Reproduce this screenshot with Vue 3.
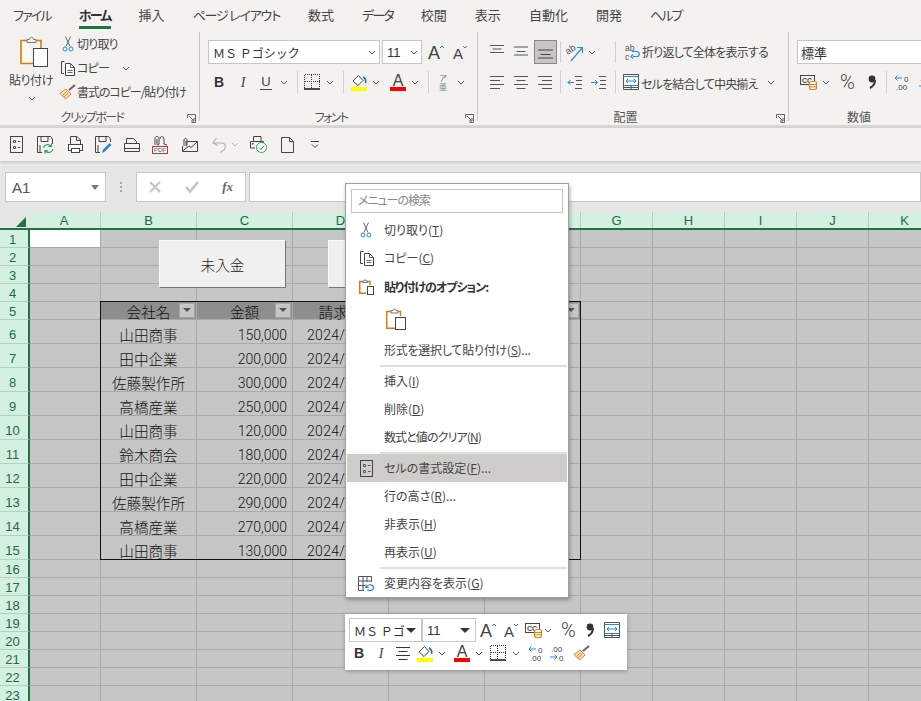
<script setup>
const size = {
  cut: [12, 16], copy: [15, 16], paste: [28, 31], painter: [17, 16], chev: [8, 5], sep: [1, 22],
  bold: [12, 16], ital: [10, 16], under: [14, 17], border: [16, 16], fill: [16, 18], fcolor: [16, 18],
  phon: [14, 18], grow: [17, 16], shrink: [16, 16], alT: [16, 16], alM: [16, 16], alBs: [23, 24],
  orient: [18, 17], alL: [16, 16], alC: [16, 16], alR: [16, 16], indL: [16, 16], indR: [16, 16],
  wrap: [16, 17], merge: [16, 16], numfmt: [17, 16], pct: [17, 16], comma: [10, 16], inc: [16, 16], dec: [16, 16],
  fmt: [13, 17], qsave: [17, 18], qprev: [15, 17], qpen: [17, 18], qopen: [16, 15], qpdf: [16, 18],
  qmail: [16, 14], qundo: [15, 16], qchev: [8, 5], qprint: [17, 17], qpage: [13, 16], qcust: [8, 9],
  changes: [16, 15], center: [16, 16]
}
function pos(start, list) {
  let x = start
  return list.map(([n, cx, w, h]) => {
    const [sw, sh] = size[n]
    const iw = w || sw
    const ih = h || sh
    const ml = cx - iw / 2 - x
    x = cx + iw / 2
    return { n, w: iw, h: ih, ml }
  })
}
const tabs = ['ファイル', 'ホーム', '挿入', 'ページ レイアウト', '数式', 'データ', '校閲', '表示', '自動化', '開発', 'ヘルプ']
const isKana = (t) => /^[\u30A0-\u30FF]+$/.test(t)
const fontTop = pos(422, [['grow', 436], ['shrink', 460]])
const fontBottom = pos(200, [['bold', 219], ['ital', 243], ['under', 266], ['chev', 284], ['sep', 297], ['border', 312], ['chev', 330], ['sep', 343], ['fill', 359], ['chev', 376], ['fcolor', 398], ['chev', 415], ['sep', 428], ['phon', 443], ['chev', 461]])
const alignTop = pos(478, [['alT', 497], ['alM', 521], ['alBs', 545], ['sep', 560], ['orient', 575], ['chev', 592], ['sep', 615], ['wrap', 632]])
const alignBottom = pos(478, [['alL', 497], ['alC', 521], ['alR', 545], ['sep', 560], ['indL', 575], ['indR', 599], ['sep', 615], ['merge', 631]])
const numBottom = pos(789, [['numfmt', 808], ['chev', 826], ['pct', 847], ['comma', 872], ['sep', 886], ['inc', 902], ['dec', 926]])
const qat = pos(0, [['fmt', 16], ['qsave', 45], ['qprev', 75], ['qpen', 103], ['qopen', 132], ['qpdf', 160], ['qmail', 190], ['qundo', 219], ['qchev', 235], ['qprint', 258], ['qpage', 287], ['qcust', 315]])
const miniTop = pos(476, [['grow', 488], ['shrink', 511], ['numfmt', 533], ['chev', 548], ['pct', 568], ['comma', 590], ['merge', 612]])
const miniBottom = pos(346, [['bold', 360], ['ital', 382], ['center', 404], ['fill', 426], ['chev', 443], ['fcolor', 463], ['chev', 480], ['border', 499], ['chev', 517], ['inc', 537], ['dec', 558], ['painter', 582]])

const cols = [
  { n: 'A', w: 73 }, { n: 'B', w: 96 }, { n: 'C', w: 96 }, { n: 'D', w: 96 }, { n: 'E', w: 96 }, { n: 'F', w: 96 },
  { n: 'G', w: 72 }, { n: 'H', w: 72 }, { n: 'I', w: 72 }, { n: 'J', w: 72 }, { n: 'K', w: 72 }
]
const table = {
  6: ['山田商事', '150,000', '2024/01/10'], 7: ['田中企業', '200,000', '2024/01/15'],
  8: ['佐藤製作所', '300,000', '2024/01/20'], 9: ['高橋産業', '250,000', '2024/01/25'],
  10: ['山田商事', '120,000', '2024/02/05'], 11: ['鈴木商会', '180,000', '2024/02/10'],
  12: ['田中企業', '220,000', '2024/02/15'], 13: ['佐藤製作所', '290,000', '2024/02/20'],
  14: ['高橋産業', '270,000', '2024/02/25'], 15: ['山田商事', '130,000', '2024/03/05']
}
const rowNums = Array.from({ length: 23 }, (_, i) => i + 1)
const menuA = [{ t: '切り取り(', k: 'T', e: ')', i: 'cut' }, { t: 'コピー(', k: 'C', e: ')', i: 'copy' }]
const menuB = [{ t: '挿入(', k: 'I', e: ')' }, { t: '削除(', k: 'D', e: ')' }, { t: '数式と値のクリア(', k: 'N', e: ')', tight: true }]
const menuC = [
  { t: 'セルの書式設定(', k: 'F', e: ')...', i: 'fmt', hover: true }, { t: '行の高さ(', k: 'R', e: ')...' },
  { t: '非表示(', k: 'H', e: ')' }, { t: '再表示(', k: 'U', e: ')' }
]
</script>

<template>
  <div class="app">
    <svg class="defs" width="0" height="0">
      <symbol id="cut" viewBox="0 0 12 16"><path d="M3.5 .5L8 10.5M8.5 .5L4 10.5" stroke="#666" fill="none"/><circle cx="3" cy="13" r="2" stroke="#2b88d8" fill="none"/><circle cx="9" cy="13" r="2" stroke="#2b88d8" fill="none"/></symbol>
      <symbol id="copy" viewBox="0 0 15 16"><path d="M4.5 1.5H1.5V13.5H4" stroke="#444" fill="none"/><path d="M5.5 3.5H10.5L14.5 7.5V15.5H5.5Z" stroke="#444" fill="#fff"/><path d="M10.5 3.5V7.5H14.5M7.5 10.5H12.5M7.5 12.5H12.5" stroke="#666" fill="none"/></symbol>
      <symbol id="paste" viewBox="0 0 28 31"><path d="M8 4.5H1V27.5H13M15 4.5H21V12" stroke="#d87a14" stroke-width="1.6" fill="#fff8ee"/><path d="M7 6.5V3.5H9.5C9.5 .5 13.5 .5 13.5 3.5H16V6.5Z" stroke="#777" fill="#f3f2f1"/><rect x="13.5" y="12.5" width="14" height="18" stroke="#444" fill="#fff"/></symbol>
      <symbol id="pasteS" viewBox="0 0 15 16"><path d="M3.5 2.5H.75V14.25H7M8.5 2.5H11V6" stroke="#d87a14" stroke-width="1.5" fill="none"/><path d="M3.5 3.5V2H5C5 .3 7 .3 7 2H8.5V3.5Z" stroke="#777" fill="#fff"/><rect x="8.5" y="7.5" width="6" height="8" stroke="#444" fill="#fff"/></symbol>
      <symbol id="pasteB" viewBox="0 0 20 22"><path d="M5 3.5H.75V20.25H9M11 3.5H14.5V8" stroke="#d87a14" stroke-width="1.5" fill="none"/><path d="M5 5V2.5H7C7 .3 10 .3 10 2.5H12V5Z" stroke="#777" fill="#fff"/><rect x="9.5" y="9.5" width="10" height="12" stroke="#444" fill="#fff"/></symbol>
      <symbol id="painter" viewBox="0 0 17 16"><path d="M16 1L10 6" stroke="#666" stroke-width="2"/><path d="M1 9.5L7 5L12 10L6.5 15Z" stroke="#e07f1c" fill="#fde7cf"/><path d="M3.5 11.5L8 7.5M5 13L9.5 9" stroke="#e07f1c"/></symbol>
      <symbol id="chev" viewBox="0 0 8 5"><path d="M1 1L4 4L7 1" stroke="#555" fill="none"/></symbol>
      <symbol id="qchev" viewBox="0 0 8 5"><path d="M1 1L4 4L7 1" stroke="#b5b3b1" fill="none"/></symbol>
      <symbol id="sep" viewBox="0 0 1 22"><rect width="1" height="22" fill="#d2d0ce"/></symbol>
      <symbol id="launch" viewBox="0 0 9 9"><path d="M.5 4V.5H8.5V8.5H4.5M2 2L7 7M7 4V7H4" stroke="#666" fill="none"/></symbol>
      <symbol id="bold" viewBox="0 0 12 16"><text x="6" y="13" text-anchor="middle" font-family="Liberation Sans" font-size="14" font-weight="700" fill="#333">B</text></symbol>
      <symbol id="ital" viewBox="0 0 10 16"><text x="5" y="13" text-anchor="middle" font-family="Liberation Serif" font-size="14" font-style="italic" fill="#444">I</text></symbol>
      <symbol id="under" viewBox="0 0 14 17"><text x="7" y="12" text-anchor="middle" font-family="Liberation Sans" font-size="13" fill="#444">U</text><path d="M1 15.5H13" stroke="#444"/></symbol>
      <symbol id="border" viewBox="0 0 16 16"><path d="M.5 .5H15.5V14M.5 .5V14M7.5 .5V14M.5 7.5H15.5" stroke="#333" stroke-dasharray="1 1" fill="none" shape-rendering="crispEdges"/><path d="M0 15H16" stroke="#111" stroke-width="1.5"/></symbol>
      <symbol id="fill" viewBox="0 0 16 18"><path d="M2 8L7.5 2.5L12 7.5L7 12.5Z" stroke="#444" fill="#fff"/><path d="M12 4C15 5.5 15 8 14.5 10" stroke="#2b6cb0" stroke-width="1.6" fill="none"/><rect y="14" width="16" height="4" fill="#ff0"/></symbol>
      <symbol id="fcolor" viewBox="0 0 16 18"><text x="8" y="12.5" text-anchor="middle" font-family="Liberation Sans" font-size="16" fill="#444">A</text><rect y="14" width="16" height="4" fill="#f00"/></symbol>
      <symbol id="phon" viewBox="0 0 14 18"><text x="7" y="8" text-anchor="middle" font-family="Noto Sans CJK JP" font-size="8" fill="#777">ア</text><text x="7" y="17" text-anchor="middle" font-family="Noto Sans CJK JP" font-size="8" fill="#777">亜</text></symbol>
      <symbol id="grow" viewBox="0 0 17 16"><text x="0" y="15" font-family="Liberation Sans" font-size="18" fill="#444">A</text><path d="M12 4L14 2L16 4" stroke="#2b88d8" fill="none"/></symbol>
      <symbol id="shrink" viewBox="0 0 16 16"><text x="1" y="15" font-family="Liberation Sans" font-size="15" fill="#444">A</text><path d="M11 2L13 4L15 2" stroke="#2b88d8" fill="none"/></symbol>
      <symbol id="alT" viewBox="0 0 16 16"><path d="M1 1.5H15M3.5 5H12.5M1 8.5H15" stroke="#555"/></symbol>
      <symbol id="alM" viewBox="0 0 16 16"><path d="M1 3H15M3.5 7.5H12.5M1 11H15" stroke="#555"/></symbol>
      <symbol id="alBs" viewBox="0 0 23 24"><rect x=".5" y=".5" width="22" height="23" fill="#c8c6c4" stroke="#8a8886"/><path d="M4 10H19M6.5 14.5H16.5M4 18H19" stroke="#444"/></symbol>
      <symbol id="orient" viewBox="0 0 18 17"><text x="0" y="9" transform="rotate(-35 4 7)" font-family="Liberation Sans" font-size="9.5" fill="#555">ab</text><path d="M5 17L16 4M11 3.5H16.5V9" stroke="#2b88d8" fill="none" stroke-width="1.2"/></symbol>
      <symbol id="alL" viewBox="0 0 16 16"><path d="M1 2.5H15M1 6.5H11M1 10.5H15M1 14.5H11" stroke="#555"/></symbol>
      <symbol id="alC" viewBox="0 0 16 16"><path d="M1 2.5H15M3.5 6.5H12.5M1 10.5H15M3.5 14.5H12.5" stroke="#555"/></symbol>
      <symbol id="alR" viewBox="0 0 16 16"><path d="M1 2.5H15M5 6.5H15M1 10.5H15M5 14.5H15" stroke="#555"/></symbol>
      <symbol id="center" viewBox="0 0 16 16"><path d="M1 2.5H15M3.5 6.5H12.5M1 10.5H15M3.5 14.5H12.5" stroke="#333"/></symbol>
      <symbol id="indL" viewBox="0 0 16 16"><path d="M8 2.5H15M9 6.5H15M9 10.5H15M8 14.5H15" stroke="#555"/><path d="M7 8.5H1M3.5 6L1 8.5L3.5 11" stroke="#2b88d8" fill="none"/></symbol>
      <symbol id="indR" viewBox="0 0 16 16"><path d="M8 2.5H15M9 6.5H15M9 10.5H15M8 14.5H15" stroke="#555"/><path d="M0 8.5H6.5M4 6L6.5 8.5L4 11" stroke="#2b88d8" fill="none"/></symbol>
      <symbol id="wrap" viewBox="0 0 16 17"><text x="1" y="7" font-family="Liberation Sans" font-size="8.5" fill="#555">ab</text><text x="1" y="16" font-family="Liberation Sans" font-size="8.5" fill="#555">c</text><path d="M9 12.5H13C16 12.5 16 7.5 13 7.5H8M9 10.5L7 12.5L9 14.5" stroke="#2b88d8" fill="none" stroke-width="1.2"/></symbol>
      <symbol id="merge" viewBox="0 0 16 16"><rect x=".5" y="2.5" width="15" height="9" fill="#fff" stroke="#2b88d8"/><path d="M.5 .5H15.5M.5 15.5H15.5M.5 .5V15.5M15.5 .5V15.5M8 11.5V15.5M.5 13.5H15.5" stroke="#555" fill="none"/><path d="M3 7H13M5 5L3 7L5 9M11 5L13 7L11 9" stroke="#2b88d8" fill="none"/></symbol>
      <symbol id="numfmt" viewBox="0 0 17 16"><rect x=".5" y="1.5" width="14" height="9" stroke="#444" fill="none"/><text x="2" y="9" font-family="Liberation Sans" font-size="7" font-weight="700" fill="#444">CC</text><rect x="9.5" y="7.5" width="7" height="8" rx="2" fill="#fff" stroke="#e07f1c" stroke-width="1.2"/><path d="M10 10.5H16M10 12.8H16" stroke="#e07f1c"/></symbol>
      <symbol id="pct" viewBox="0 0 17 16"><text x="8.5" y="15" text-anchor="middle" font-family="Roboto" font-weight="300" font-size="20" fill="#444">%</text></symbol>
      <symbol id="comma" viewBox="0 0 10 16"><circle cx="5" cy="5" r="3.4" fill="#333"/><path d="M8 6C8 10 6 12.5 3 14" stroke="#333" stroke-width="2" fill="none"/></symbol>
      <symbol id="inc" viewBox="0 0 16 16"><path d="M8 4H1M3.5 1.5L1 4L3.5 6.5" stroke="#2b88d8" fill="none"/><text x="10" y="8" font-family="Liberation Sans" font-size="8" fill="#444">0</text><text x="2" y="16" font-family="Liberation Sans" font-size="8" fill="#444">.00</text></symbol>
      <symbol id="dec" viewBox="0 0 16 16"><text x="2" y="7" font-family="Liberation Sans" font-size="8" fill="#444">.00</text><path d="M1 12H8M5.5 9.5L8 12L5.5 14.5" stroke="#2b88d8" fill="none"/><text x="10" y="16" font-family="Liberation Sans" font-size="8" fill="#444">0</text></symbol>
      <symbol id="fmt" viewBox="0 0 13 17"><rect x=".5" y=".5" width="12" height="16" fill="none" stroke="#444"/><path d="M3.5 4.5H5.5V6.5H3.5ZM3.5 10.5H5.5V12.5H3.5Z" fill="none" stroke="#555"/><path d="M8 5.5H10.5M8 11.5H10.5" stroke="#555"/></symbol>
      <symbol id="qsave" viewBox="0 0 17 18"><path d="M5 16.5H.5V.5H13.5L15.5 3V8" stroke="#444" fill="none"/><path d="M4 .5V5.5H11V.5M3 9V16" stroke="#444" fill="none"/><path d="M6.5 12C7 8.5 11.5 7.5 14 10M16 13C15.5 16.5 11 17.5 8.5 15M14.5 7.5V10.5H11.5M8 17.5V14.5H11" stroke="#2e9e5b" stroke-width="1.2" fill="none"/></symbol>
      <symbol id="qprev" viewBox="0 0 15 17"><path d="M2.5 8V.5H9L12.5 4V8M8.5 .5V4.5H12.5" stroke="#444" fill="none"/><rect x=".5" y="8.5" width="14" height="6" fill="#fff" stroke="#444"/><rect x="3.5" y="12.5" width="8" height="4" fill="#fff" stroke="#444"/></symbol>
      <symbol id="qpen" viewBox="0 0 17 18"><path d="M5 16.5H.5V.5H13.5L15.5 3V6" stroke="#444" fill="none"/><path d="M4 .5V5.5H11V.5M3 9V16" stroke="#444" fill="none"/><path d="M7 17L8 13.5L14.5 7L16.5 9L10 15.5Z" fill="#2b88d8"/></symbol>
      <symbol id="qopen" viewBox="0 0 16 15"><path d="M2.5 6V1.5H9.5L12.5 4.5V6" stroke="#444" fill="none"/><path d="M.5 6.5H15.5V14.5H.5ZM.5 11.5H15.5" stroke="#444" fill="none"/></symbol>
      <symbol id="qpdf" viewBox="0 0 16 18"><path d="M3 9V2.5C3 -.2 7 -.2 7 2.5V8C7 9.5 5 9.5 5 8V3M8 3C8 -.2 12 -.2 12 3V8L15 9" stroke="#444" fill="none"/><rect x=".5" y="10.5" width="15" height="7" stroke="#d9302c" fill="#fff"/><text x="8" y="16.3" text-anchor="middle" font-family="Liberation Sans" font-size="6" fill="#555">PDF</text></symbol>
      <symbol id="qmail" viewBox="0 0 16 14"><path d="M5 3.5H15.5V13.5H.5V8M.5 13L7 8L9 9.5L15.5 3.5" stroke="#444" fill="none"/><path d="M2 8V2C2 0 5 0 5 2V7C5 8 4 8 4 7V3" stroke="#444" fill="none"/></symbol>
      <symbol id="qundo" viewBox="0 0 15 16"><path d="M1 6H9C15 6 15 12 8 15.5M4.5 1L1 6L6 8.5" stroke="#b5b3b1" stroke-width="1.2" fill="none"/></symbol>
      <symbol id="qprint" viewBox="0 0 17 17"><path d="M3.5 5V.5H11V5M.5 5.5H13.5V9M.5 5.5V12H5" stroke="#444" fill="none"/><rect x="2" y="7" width="1.5" height="1.5" fill="#444"/><circle cx="11.5" cy="11.5" r="5" fill="#fff" stroke="#2e9e5b"/><path d="M9 11.5L11 13.5L14 9.8" stroke="#2e9e5b" fill="none"/></symbol>
      <symbol id="qpage" viewBox="0 0 13 16"><path d="M.5 .5H8.5L12.5 4.5V15.5H.5ZM8.5 .5V4.5H12.5" stroke="#444" fill="none"/></symbol>
      <symbol id="qcust" viewBox="0 0 8 9"><path d="M0 1.5H8" stroke="#444"/><path d="M1 4.5L4 7.5L7 4.5" stroke="#444" fill="none"/></symbol>
      <symbol id="changes" viewBox="0 0 16 15"><path d="M.5 .5H13.5V6M.5 .5V14.5H6M.5 5H13.5M.5 9.5H7M5 .5V14.5M9 .5V6" stroke="#555" fill="none"/><path d="M8 8.5V11.5H11M8.5 11C10 7.5 15.5 8.5 15.5 11.5C15.5 14.5 11.5 15.5 9.5 13.5" stroke="#2b88d8" fill="none" stroke-width="1.2"/></symbol>
    </svg>

    <header class="ribbon">
      <nav class="tabs">
        <span v-for="t in tabs" :key="t" class="tab" :class="{ active: t === 'ホーム', kana: isKana(t), spaced: t.includes(' ') }">{{ t }}</span>
      </nav>
      <div class="groups">
        <section class="group g-clip">
          <div class="body clip-body">
            <div class="paste-col">
              <svg class="paste-icon" width="28" height="31"><use href="#paste" /></svg>
              <span class="txt paste-label">貼り付け</span>
              <svg class="paste-chev" width="8" height="5"><use href="#chev" /></svg>
            </div>
            <div class="clip-list">
              <div class="clip-row"><span class="clip-ic"><svg width="12" height="16"><use href="#cut" /></svg></span><span class="txt">切り取り</span></div>
              <div class="clip-row"><span class="clip-ic"><svg width="15" height="16"><use href="#copy" /></svg></span><span class="txt">コピー</span><svg class="copy-chev" width="8" height="5"><use href="#chev" /></svg></div>
              <div class="clip-row"><span class="clip-ic"><svg width="17" height="16"><use href="#painter" /></svg></span><span class="txt painter-txt">書式のコピー/貼り付け</span></div>
            </div>
          </div>
          <div class="label"><span class="lk">クリップボード</span><svg class="launch" width="9" height="9"><use href="#launch" /></svg></div>
        </section>

        <section class="group g-font">
          <div class="body">
            <div class="irow">
              <div class="combo font-combo"><span>ＭＳ Ｐゴシック</span><svg width="8" height="5"><use href="#chev" /></svg></div>
              <div class="combo size-combo"><span class="num11">11</span><svg width="8" height="5"><use href="#chev" /></svg></div>
              <svg v-for="(i, k) in fontTop" :key="k" class="ic" :style="{ marginLeft: i.ml + 'px' }" :width="i.w" :height="i.h"><use :href="'#' + i.n" /></svg>
            </div>
            <div class="irow second">
              <svg v-for="(i, k) in fontBottom" :key="k" class="ic" :style="{ marginLeft: i.ml + 'px' }" :width="i.w" :height="i.h"><use :href="'#' + i.n" /></svg>
            </div>
          </div>
          <div class="label"><span class="lk">フォント</span><svg class="launch" width="9" height="9"><use href="#launch" /></svg></div>
        </section>

        <section class="group g-align">
          <div class="body">
            <div class="irow">
              <svg v-for="(i, k) in alignTop" :key="k" class="ic" :style="{ marginLeft: i.ml + 'px' }" :width="i.w" :height="i.h"><use :href="'#' + i.n" /></svg>
              <span class="txt wide">折り返して全体を表示する</span>
            </div>
            <div class="irow second">
              <svg v-for="(i, k) in alignBottom" :key="k" class="ic" :style="{ marginLeft: i.ml + 'px' }" :width="i.w" :height="i.h"><use :href="'#' + i.n" /></svg>
              <span class="txt wide low">セルを結合して中央揃え</span>
              <svg class="merge-chev" width="8" height="5"><use href="#chev" /></svg>
            </div>
          </div>
          <div class="label"><span>配置</span><svg class="launch" width="9" height="9"><use href="#launch" /></svg></div>
        </section>

        <section class="group g-num">
          <div class="body">
            <div class="irow"><div class="combo num-combo"><span>標準</span></div></div>
            <div class="irow second">
              <svg v-for="(i, k) in numBottom" :key="k" class="ic" :style="{ marginLeft: i.ml + 'px' }" :width="i.w" :height="i.h"><use :href="'#' + i.n" /></svg>
            </div>
          </div>
          <div class="label"><span>数値</span><svg class="launch" width="9" height="9"><use href="#launch" /></svg></div>
        </section>
      </div>
    </header>

    <div class="qat">
      <svg v-for="(i, k) in qat" :key="k" class="ic" :style="{ marginLeft: i.ml + 'px' }" :width="i.w" :height="i.h"><use :href="'#' + i.n" /></svg>
    </div>

    <div class="fbar">
      <div class="namebox"><span>A1</span><i class="tri"></i></div>
      <div class="dots"><i></i><i></i><i></i></div>
      <div class="fbtns">
        <span class="fb-i"><svg width="12" height="12"><path d="M1 1L11 11M11 1L1 11" stroke="#c4c4c4" stroke-width="2" fill="none" /></svg></span>
        <span class="fb-i"><svg width="14" height="12"><path d="M1 6L5 10.5L13 1" stroke="#c4c4c4" stroke-width="2.6" fill="none" /></svg></span>
        <span class="fb-f">fx</span>
      </div>
      <div class="finput"></div>
    </div>

    <main class="sheet">
      <div class="colhead">
        <div class="corner"><svg width="10" height="10"><path d="M10 0V10H0Z" fill="#217346" /></svg></div>
        <div v-for="c in cols" :key="c.n" class="ch" :class="'w' + c.w">{{ c.n }}</div>
      </div>
      <div v-for="r in rowNums" :key="r" class="row" :class="{ tall: r >= 6 && r <= 15, hd: r === 5 }">
        <div class="rh">{{ r }}</div>
        <div class="cell a" :class="{ a1: r === 1 }"></div>
        <template v-if="r === 5">
          <div class="cell w96 thc">会社名<i class="fbtn"></i></div>
          <div class="cell w96 thc">金額<i class="fbtn"></i></div>
          <div class="cell w96 thc">請求日<i class="fbtn"></i></div>
          <div class="cell w96 thc"><i class="fbtn"></i></div>
          <div class="cell w96 thc"><i class="fbtn"></i></div>
        </template>
        <template v-else-if="table[r]">
          <div class="cell w96 tc">{{ table[r][0] }}</div>
          <div class="cell w96 tr">{{ table[r][1] }}</div>
          <div class="cell w96 td">{{ table[r][2] }}</div>
          <div class="cell w96"></div>
          <div class="cell w96"></div>
        </template>
        <template v-else>
          <div v-for="n in 5" :key="n" class="cell w96"></div>
        </template>
        <div v-for="n in 5" :key="'x' + n" class="cell w72"></div>
      </div>
      <div class="frame"></div>
      <button class="sbtn s1">未入金</button>
      <button class="sbtn s2"></button>
    </main>

    <div class="menu">
      <div class="search">メニューの検索</div>
      <div v-for="m in menuA" :key="m.k" class="mi">
        <span class="mic"><svg :width="m.i === 'cut' ? 12 : 15" height="16"><use :href="'#' + m.i" /></svg></span>
        <span class="mt">{{ m.t }}<u>{{ m.k }}</u>{{ m.e }}</span>
      </div>
      <div class="mi mh">
        <span class="mic"><svg width="15" height="16"><use href="#pasteS" /></svg></span>
        <b class="mt bh">貼り付けのオプション:</b>
      </div>
      <div class="mbig"><svg width="20" height="22"><use href="#pasteB" /></svg></div>
      <div class="mi"><span class="mic"></span><span class="mt slight">形式を選択して貼り付け(<u>S</u>)...</span></div>
      <div class="msep"></div>
      <div v-for="m in menuB" :key="m.k" class="mi"><span class="mic"></span><span class="mt" :class="{ tight: m.tight }">{{ m.t }}<u>{{ m.k }}</u>{{ m.e }}</span></div>
      <div class="msep"></div>
      <div v-for="m in menuC" :key="m.k" class="mi" :class="{ hover: m.hover }">
        <span class="mic"><svg v-if="m.i" width="13" height="17"><use href="#fmt" /></svg></span>
        <span class="mt">{{ m.t }}<u>{{ m.k }}</u>{{ m.e }}</span>
      </div>
      <div class="msep"></div>
      <div class="mi"><span class="mic"><svg width="16" height="15"><use href="#changes" /></svg></span><span class="mt">変更内容を表示(<u>G</u>)</span></div>
    </div>

    <div class="mini">
      <div class="irow mrow">
        <div class="combo mcombo mfont"><span>ＭＳ Ｐゴ</span><i class="tri dark"></i></div>
        <div class="combo mcombo msize"><span class="num11">11</span><i class="tri dark"></i></div>
        <svg v-for="(i, k) in miniTop" :key="k" class="ic" :style="{ marginLeft: i.ml + 'px' }" :width="i.w" :height="i.h"><use :href="'#' + i.n" /></svg>
      </div>
      <div class="irow mrow2">
        <svg v-for="(i, k) in miniBottom" :key="k" class="ic" :style="{ marginLeft: i.ml + 'px' }" :width="i.w" :height="i.h"><use :href="'#' + i.n" /></svg>
      </div>
    </div>
  </div>
</template>

<style scoped>
.app { position: relative; width: 921px; height: 701px; overflow: hidden; background: #e6e6e6; font-family: "Noto Sans CJK JP", "Noto Sans", sans-serif; color: #444; font-feature-settings: "palt"; }
.defs { display: none; }
.ic { display: block; flex: none; }
svg { display: block; flex: none; }
.ribbon { height: 128px; box-sizing: border-box; background: #f3f2f1; border-bottom: 3px solid #dad8d6; }
.tabs { height: 30px; display: flex; gap: 28px; padding-left: 13px; }
.tab { position: relative; height: 26px; line-height: 29px; font-size: 13px; white-space: pre; }
.tab.kana { letter-spacing: -1.8px; }
.tab.spaced { letter-spacing: -1.2px; }
.tab.active { font-weight: 700; color: #333; border-bottom: 3px solid #217346; }
.groups { display: flex; margin-top: 2px; }
.group { flex: none; box-sizing: border-box; height: 89px; border-right: 1px solid #c8c6c4; }
.g-clip { width: 200px; }
.g-font { width: 278px; }
.g-align { width: 311px; }
.g-num { width: 155px; border-right: 0; }
.body { height: 74px; box-sizing: border-box; padding-top: 8px; }
.clip-body { display: flex; padding-top: 0; }
.label { display: flex; align-items: center; height: 20px; font-size: 12px; color: #555; }
.label span { flex: 1; text-align: center; }
.label .lk { letter-spacing: -1.6px; }
.launch { margin: 4px 3px 0 3px; }
.txt { font-size: 12px; color: #444; white-space: nowrap; letter-spacing: -.8px; }
.paste-col { flex: none; width: 62px; display: flex; flex-direction: column; align-items: center; }
.paste-icon { margin: 4px 0 0 5px; }
.paste-label { margin-top: 4px; line-height: 18px; letter-spacing: -.4px; }
.paste-chev { margin-top: 7px; margin-left: 2px; }
.clip-list { margin-left: -4px; }
.clip-row { display: flex; align-items: center; height: 24px; }
.clip-row .txt { margin-top: -2px; }
.clip-row .painter-txt { letter-spacing: -1.05px; }
.clip-ic { width: 19px; display: flex; justify-content: center; }
.copy-chev { margin-left: 13px; }
.irow { display: flex; align-items: center; height: 24px; }
.second { margin-top: 6px; }
.combo { display: flex; align-items: center; justify-content: space-between; box-sizing: border-box; height: 24px; background: #fff; border: 1px solid #c8c6c4; padding: 0 3px 0 4px; font-size: 12px; color: #333; font-feature-settings: normal; }
.num11 { font: 13px "Liberation Sans", sans-serif; }
.font-combo { width: 172px; margin-left: 8px; }
.size-combo { width: 40px; margin-left: 2px; }
.num-combo { width: 132px; margin-left: 8px; font-size: 13px; justify-content: flex-start; padding-left: 3px; }
.wide { margin-left: 2px; margin-top: -2px; }
.wide.low { margin-top: 3px; }
.merge-chev { margin-left: 9px; }
.qat { display: flex; align-items: center; height: 33px; background: #f3f2f1; box-shadow: 0 1px 3px rgba(0, 0, 0, .18); position: relative; }
.fbar { display: flex; height: 51px; box-sizing: border-box; padding: 11px 0 10px 5px; background: #e6e6e6; }
.namebox, .fbtns, .finput { box-sizing: border-box; height: 30px; background: #fff; border: 1px solid #c8c8c8; }
.namebox { width: 102px; display: flex; align-items: center; justify-content: space-between; padding: 0 5px 0 6px; font: 15px "Liberation Sans", sans-serif; color: #555; }
.tri { width: 0; height: 0; border: 4px solid transparent; border-top: 5px solid #777; border-bottom: 0; margin-right: 1px; }
.tri.dark { border-top-color: #333; margin-right: 3px; border-width: 5px 5px 0; }
.dots { width: 30px; display: flex; flex-direction: column; align-items: center; justify-content: center; gap: 2px; }
.dots i { width: 2px; height: 2px; background: #aaa; }
.fbtns { width: 110px; display: flex; align-items: center; }
.fb-i { width: 37px; display: flex; justify-content: center; }
.fb-f { width: 34px; text-align: center; font: italic 700 13px "Liberation Serif", serif; color: #666; }
.finput { width: 680px; margin-left: 3px; }
.sheet { position: relative; background: #c6c6c6; height: 489px; overflow: hidden; }
.colhead { display: flex; height: 18px; box-sizing: border-box; border-bottom: 2px solid #217346; width: 960px; }
.corner { flex: none; width: 28px; background: #e6e6e6; display: flex; justify-content: flex-end; padding: 5px 2px 0 0; box-sizing: border-box; }
.ch { flex: none; box-sizing: border-box; background: #d3f0e0; border-right: 1px solid #bcc9c1; text-align: center; font: 13px/18px "Liberation Sans", sans-serif; color: #1f6b47; }
.w73 { width: 73px; }
.w96 { width: 96px; }
.w72 { width: 72px; }
.row { display: flex; height: 18px; width: 960px; }
.row.tall { height: 24px; }
.rh { flex: none; box-sizing: border-box; width: 30px; padding-right: 3px; background: #d3f0e0; border-right: 2px solid #217346; border-bottom: 1px solid #b5cfc0; text-align: center; font: 13px/20px "Liberation Sans", sans-serif; color: #1f6b47; }
.row.tall .rh { line-height: 30px; }
.cell { flex: none; box-sizing: border-box; border-right: 1px solid #a9a9a9; border-bottom: 1px solid #a9a9a9; position: relative; font-size: 14.6px; color: #111; font-feature-settings: normal; white-space: nowrap; font-weight: 300; }
.cell.a { width: 71px; }
.cell.a1 { background: #fff; }
.hd .w96 { background: #8e8e8e; }
.thc { text-align: center; line-height: 19px; }
.tc { text-align: center; line-height: 30px; }
.tr { text-align: right; padding-right: 5px; font: 300 14px/31px Roboto, "Liberation Sans", sans-serif; }
.td { padding-left: 14px; letter-spacing: .3px; font: 300 14px/31px Roboto, "Liberation Sans", sans-serif; }
.fbtn { position: absolute; right: 1px; top: 1px; box-sizing: border-box; width: 16px; height: 15px; background: #c6c6c6; border: 1px solid #a5a5a5; }
.fbtn::after { content: ""; position: absolute; left: 3px; top: 4px; border: 4px solid transparent; border-top: 4px solid #555; border-bottom: 0; }
.frame { position: absolute; left: 100px; top: 89px; width: 481px; height: 259px; box-sizing: border-box; border: 1px solid #111; pointer-events: none; }
.sbtn { position: absolute; top: 28px; height: 48px; box-sizing: border-box; background: #f0f0f0; border: 1px solid; border-color: #fafafa #777 #777 #fafafa; font-family: inherit; font-size: 14.6px; font-weight: 300; color: #222; padding: 0; font-feature-settings: normal; }
.s1 { left: 159px; width: 127px; }
.s2 { left: 328px; width: 127px; }
.menu { position: absolute; left: 345px; top: 183px; width: 224px; height: 415px; box-sizing: border-box; padding: 5px 1px 0; background: #fff; border: 1px solid #a0a0a0; box-shadow: 1px 2px 4px rgba(0, 0, 0, .3); font-size: 12px; color: #444; }
.search { box-sizing: border-box; height: 24px; margin: 0 4px 3px; border: 1px solid #c8c6c4; padding-left: 6px; line-height: 20px; color: #888; letter-spacing: -1px; }
.mi { display: flex; align-items: center; height: 28px; }
.mh { height: 30px; color: #333; }
.mic { width: 37px; display: flex; justify-content: center; padding-left: 1px; box-sizing: border-box; }
.mt { margin-top: -2px; }
.bh { letter-spacing: -1px; }
.tight { letter-spacing: -.9px; }
.slight { letter-spacing: -.25px; }
.mbig { height: 34px; padding-left: 39px; display: flex; align-items: center; }
.msep { height: 3px; box-sizing: border-box; margin-left: 33px; border-bottom: 2px solid #e1dfdd; border-top: 1px solid transparent; }
.mi.hover { background: #cfcdca; }
.mi u { text-decoration: underline; }
.mini { position: absolute; left: 345px; top: 614px; width: 282px; height: 56px; box-sizing: border-box; background: #fff; box-shadow: 0 1px 4px rgba(0, 0, 0, .3); }
.mrow { margin-top: 4px; }
.mrow2 { margin-top: -1px; }
.mcombo { padding-right: 2px; }
.mfont { width: 73px; margin-left: 4px; }
.msize { width: 54px; margin-left: 0; }
</style>

<style>
html, body { margin: 0; overflow: hidden; }
</style>
